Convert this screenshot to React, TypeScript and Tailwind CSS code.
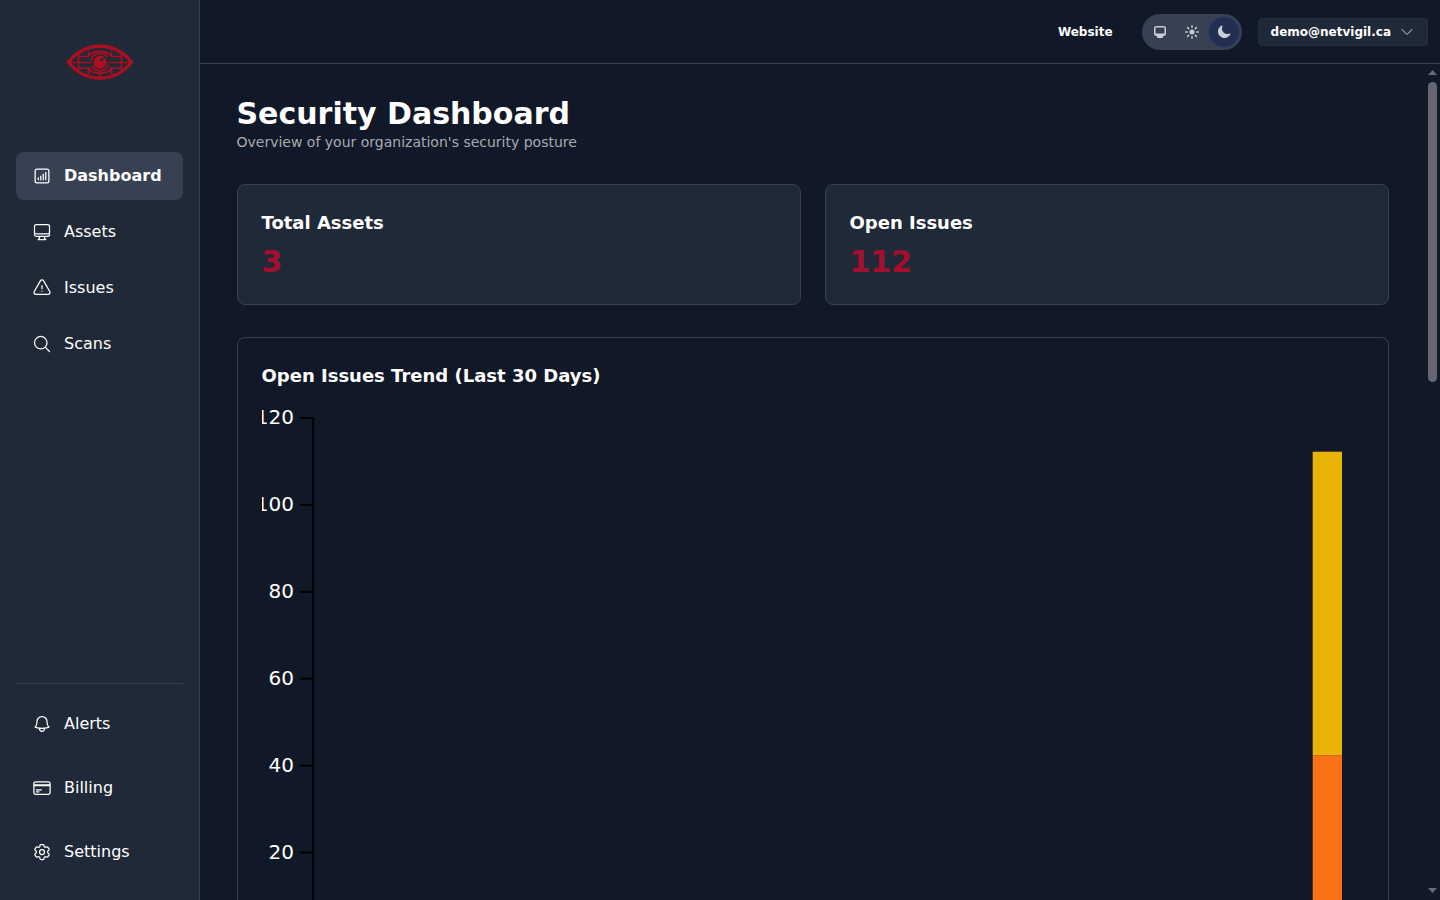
import {
  HiOutlineBell,
  HiOutlineChartBarSquare,
  HiOutlineChevronDown,
  HiOutlineCog6Tooth,
  HiOutlineComputerDesktop,
  HiOutlineCreditCard,
  HiOutlineExclamationTriangle,
  HiOutlineMagnifyingGlass,
} from "react-icons/hi2";

const mainNav = [
  { name: "Dashboard", icon: HiOutlineChartBarSquare, active: true },
  { name: "Assets", icon: HiOutlineComputerDesktop },
  { name: "Issues", icon: HiOutlineExclamationTriangle },
  { name: "Scans", icon: HiOutlineMagnifyingGlass },
];

const bottomNav = [
  { name: "Alerts", icon: HiOutlineBell },
  { name: "Billing", icon: HiOutlineCreditCard },
  { name: "Settings", icon: HiOutlineCog6Tooth },
];

const stats = [
  { label: "Total Assets", value: 3 },
  { label: "Open Issues", value: 112 },
];

const themes = [
  {
    name: "System",
    path: "M2 4.25A2.25 2.25 0 0 1 4.25 2h7.5A2.25 2.25 0 0 1 14 4.25v5.5A2.25 2.25 0 0 1 11.75 12h-1.312c.1.128.21.248.328.36a.75.75 0 0 1 .234.545v.345a.75.75 0 0 1-.75.75h-4.500a.75.75 0 0 1-.75-.75v-.345a.75.75 0 0 1 .234-.545c.118-.111.228-.232.328-.36H4.25A2.25 2.25 0 0 1 2 9.75v-5.500Zm2.25-.75a.75.75 0 0 0-.75.75v4.500c0 .414.336.75.75.75h7.500a.75.75 0 0 0 .75-.75v-4.500a.75.75 0 0 0-.75-.75h-7.500Z",
  },
  {
    name: "Light",
    path: "M8 1a.75.75 0 0 1 .75.75v1.500a.75.75 0 0 1-1.500 0v-1.500A.75.75 0 0 1 8 1ZM10.500 8a2.500 2.500 0 1 1-5 0 2.500 2.500 0 0 1 5 0ZM12.950 4.110a.75.75 0 1 0-1.060-1.060l-1.062 1.060a.75.75 0 0 0 1.061 1.062l1.060-1.061ZM15 8a.75.75 0 0 1-.75.75h-1.500a.75.75 0 0 1 0-1.500h1.500A.75.75 0 0 1 15 8ZM11.890 12.950a.75.75 0 0 0 1.060-1.060l-1.060-1.062a.75.75 0 0 0-1.062 1.061l1.061 1.060ZM8 12a.75.75 0 0 1 .75.75v1.500a.75.75 0 0 1-1.500 0v-1.500A.75.75 0 0 1 8 12ZM5.172 11.890a.75.75 0 0 0-1.061-1.062L3.050 11.890a.75.75 0 1 0 1.060 1.060l1.060-1.060ZM4 8a.75.75 0 0 1-.75.75h-1.500a.75.75 0 0 1 0-1.500h1.500A.75.75 0 0 1 4 8ZM4.110 5.172A.75.75 0 0 0 5.173 4.110L4.110 3.050a.75.75 0 1 0-1.060 1.060l1.060 1.060Z",
  },
  {
    name: "Dark",
    active: true,
    path: "M14.438 10.148c.19-.425-.321-.787-.748-.601A5.500 5.500 0 0 1 6.453 2.310c.186-.427-.176-.938-.6-.748a6.501 6.501 0 1 0 8.585 8.586Z",
  },
];

const ticks = [120, 100, 80, 60, 40, 20, 0];

function Logo() {
  return (
    <svg width="66" height="36" viewBox="0 0 66 36" fill="none" stroke="#a90f1f">
      <path d="M1.500 18.300C10 7.500 20 2.300 33 2.300S56 7.500 64.500 18.300C56 29 46 34.200 33 34.200S10 29 1.500 18.300Z" strokeWidth="3.400" />
      <path d="M3 18.500h22M41 18.500h22M11 12.500h11M44 12.500h11M11 24.300h13M42 24.300h13" strokeWidth="1.500" />
      <path d="M11.500 10.500v16M21.500 7v6M21.500 23v7M44.500 7v6M44.500 23v7M54.500 10.500v16M33 27v6" strokeWidth="1.700" />
      <path d="M21 12.500c3-3.500 7-5 12-5s9 1.500 12 5M21 24.300c3 3.700 7 5 12 5s9-1.300 12-5" strokeWidth="1.900" />
      <path d="M40.500 13.500a9 9 0 0 0-16.300 3M25 22a9 9 0 0 0 16.500-1.500" strokeWidth="1.800" />
      <circle cx="33" cy="18.300" r="6.500" fill="#a90f1f" stroke="none" />
      <circle cx="35" cy="15.500" r="1.500" fill="#202937" stroke="none" />
    </svg>
  );
}

function Sidebar() {
  return (
    <aside className="flex w-[200px] shrink-0 flex-col border-r border-[#374151] bg-[#1f2937] px-4 pb-6">
      <div className="flex h-[124px] items-center justify-center">
        <Logo />
      </div>
      <nav className="mt-7 flex flex-col gap-2">
        {mainNav.map((item) => (
          <a
            key={item.name}
            className={`flex h-12 items-center gap-3 rounded-lg px-4 ${
              item.active ? "bg-[#374151] font-bold" : ""
            }`}
          >
            <item.icon className="h-5 w-5" />
            <span>{item.name}</span>
          </a>
        ))}
      </nav>
      <div className="mt-auto flex flex-col gap-4 border-t border-[#374151] pt-4">
        {bottomNav.map((item) => (
          <a key={item.name} className="flex h-12 items-center gap-3 px-4">
            <item.icon className="h-5 w-5" />
            <span>{item.name}</span>
          </a>
        ))}
      </div>
    </aside>
  );
}

function Header() {
  return (
    <header className="flex h-16 shrink-0 items-center justify-end border-b border-[#374151] pr-3 text-xs font-bold">
      <a className="mr-[29px]">Website</a>
      <div className="mr-4 flex h-9 w-[100px] items-center rounded-full bg-[#374151] px-0.5 text-[#c9cdd4]">
        {themes.map((theme) => (
          <button
            key={theme.name}
            aria-label={theme.name}
            className={`flex h-8 w-8 items-center justify-center rounded-full ${
              theme.active ? "border border-[#2b4270] bg-[#222f50]" : ""
            }`}
          >
            <svg className="h-4 w-4" viewBox="0 0 16 16" fill="currentColor">
              <path fillRule="evenodd" clipRule="evenodd" d={theme.path} />
            </svg>
          </button>
        ))}
      </div>
      <button className="flex h-7 items-center gap-2 rounded border border-[#25303d] bg-[#1f2937] px-3">
        <span>demo@netvigil.ca</span>
        <HiOutlineChevronDown className="h-4 w-4 text-[#d1d5db]" />
      </button>
    </header>
  );
}

function TrendChart() {
  return (
    <svg width="1102" height="560" className="mt-[13px] block overflow-hidden">
      {ticks.map((tick, i) => (
        <g key={tick}>
          <path d={`M38 ${15 + i * 86.9}h13`} stroke="#000" strokeWidth="2" />
          <text x="32" y={21 + i * 86.9} textAnchor="end" fontSize="20" fill="#fff">
            {tick}
          </text>
        </g>
      ))}
      <path d="M51 14v522" stroke="#000" strokeWidth="2" />
      <rect x="1050.700" y="48.700" width="29.300" height="303.500" fill="#eab308" />
      <rect x="1050.700" y="352.200" width="29.300" height="184" fill="#f97316" />
    </svg>
  );
}

function Scrollbar() {
  return (
    <div className="flex w-[15px] shrink-0 flex-col items-center pt-1.5 pb-[7px]">
      <svg width="9" height="5" viewBox="0 0 9 5" fill="#6b6b76">
        <path d="M0 5 4.500 0 9 5Z" />
      </svg>
      <div className="mt-[7px] h-[300px] w-[9px] rounded-full bg-[#666672]" />
      <svg className="mt-auto" width="9" height="5" viewBox="0 0 9 5" fill="#6b6b76">
        <path d="M0 0 4.500 5 9 0Z" />
      </svg>
    </div>
  );
}

export default function App() {
  return (
    <div className="flex h-screen overflow-hidden bg-[#111827] font-['DejaVu_Sans',sans-serif] text-white">
      <Sidebar />
      <div className="flex min-w-0 flex-1 flex-col">
        <Header />
        <div className="flex min-h-0 flex-1">
          <main className="min-w-0 flex-1 overflow-hidden pt-8">
            <div className="mx-auto w-[1152px]">
              <h1 className="text-3xl font-bold">Security Dashboard</h1>
              <p className="text-sm text-[#a9abb0]">
                Overview of your organization's security posture
              </p>
              <div className="mt-8 grid grid-cols-2 gap-6">
                {stats.map((stat) => (
                  <div
                    key={stat.label}
                    className="rounded-lg border border-[#374151] bg-[#1f2937] p-6"
                  >
                    <h2 className="text-lg font-bold">{stat.label}</h2>
                    <p className="mt-[7px] text-3xl font-bold text-[#a50f2d]">{stat.value}</p>
                  </div>
                ))}
              </div>
              <div className="mt-8 rounded-lg border border-[#374151] p-6">
                <h2 className="text-lg font-bold">Open Issues Trend (Last 30 Days)</h2>
                <TrendChart />
              </div>
            </div>
          </main>
          <Scrollbar />
        </div>
      </div>
    </div>
  );
}
